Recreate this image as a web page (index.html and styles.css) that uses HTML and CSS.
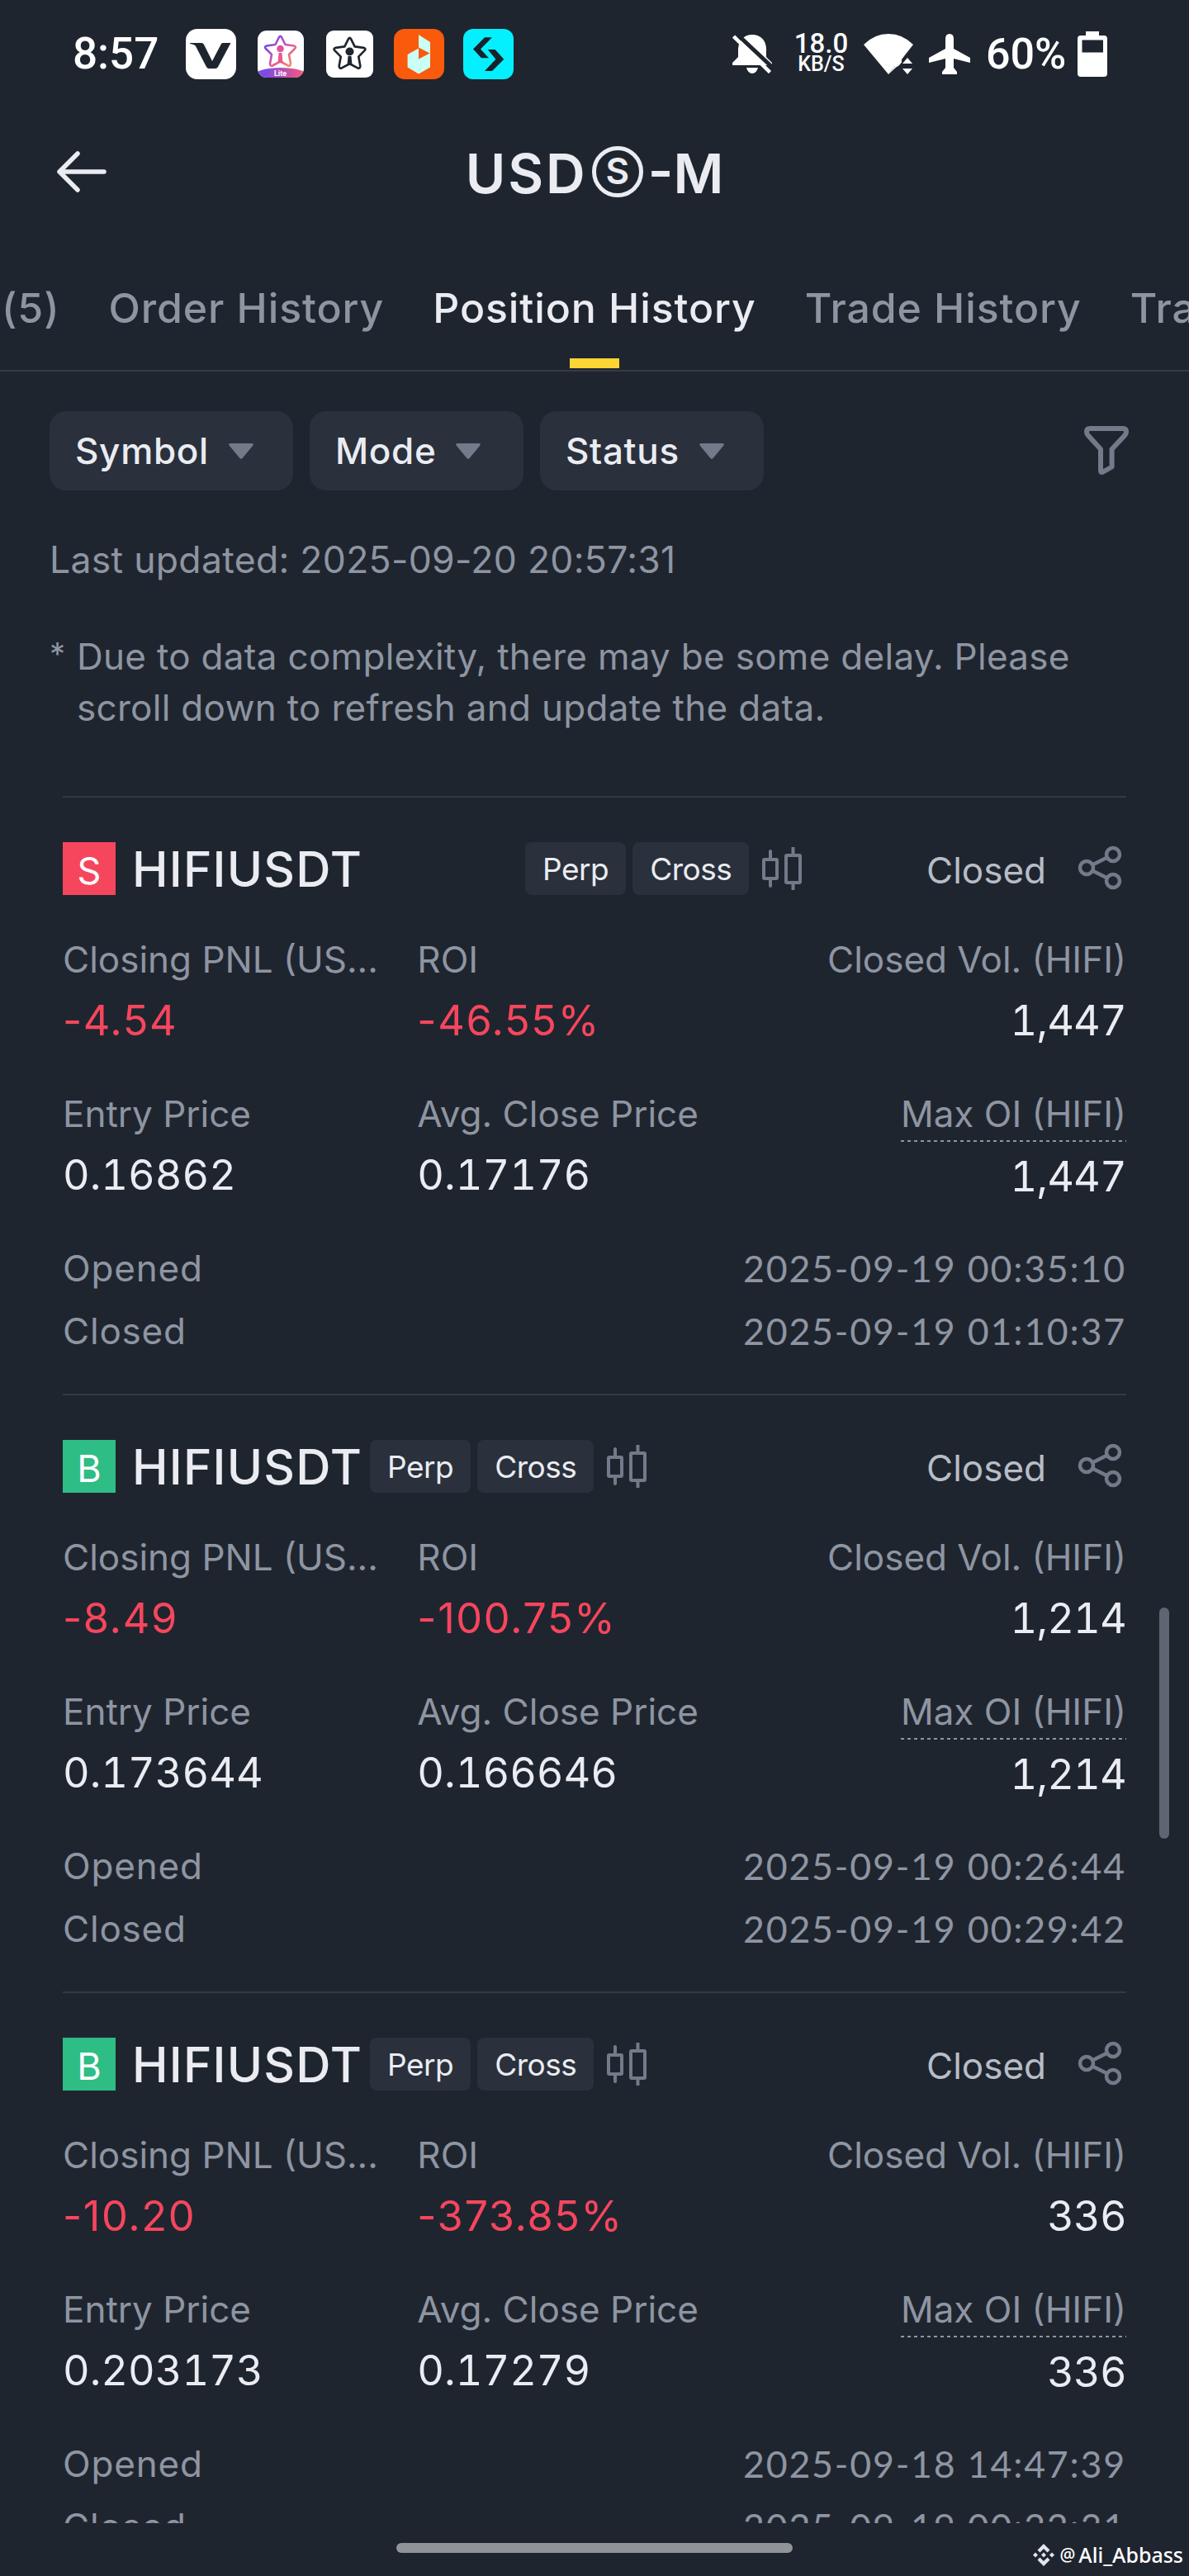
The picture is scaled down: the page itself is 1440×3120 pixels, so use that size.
FILE: index.html
```html
<!DOCTYPE html>
<html lang="en">
<head>
  <meta charset="UTF-8" />
  <meta name="viewport" content="width=device-width, initial-scale=1" />
  <title>Position History</title>
  <link rel="stylesheet" href="styles.css">
</head>
<body>
  <!-- Shared icons -->
  <svg class="sprite" width="0" height="0">
    <symbol id="candles" viewBox="0 0 48 52">
      <g fill="none" stroke="#737a89" stroke-width="4">
        <rect x="2" y="15" width="16" height="23" rx="1" />
        <rect x="29" y="10" width="17" height="33" rx="1" />
        <path d="M10 5v9M10 39v8M37.500 1v8M37.500 44v7" stroke-linecap="round" />
      </g>
    </symbol>
    <symbol id="share" viewBox="0 0 54 54">
      <g fill="none" stroke="#737a89" stroke-width="4.500">
        <circle cx="11" cy="27" r="8" />
        <circle cx="43" cy="11" r="8" />
        <circle cx="43" cy="43" r="8" />
        <path d="M18 23.500L36 14.500M18 30.500L36 39.500" />
      </g>
    </symbol>
    <symbol id="star" viewBox="0 0 42 41">
      <path d="M19.500 3.500Q21 1 22.500 3.500L27 12.500L37.500 14Q41 15 38.500 17.500L31.500 24.500L33.500 35.500Q33.500 39 30.500 38L21 33L11.500 38Q8.500 39 8.500 35.500L10.500 24.500L3.500 17.500Q1 15 4.500 14L15 12.500Z" fill="none" stroke-width="2.600" stroke-linejoin="round" />
    </symbol>
  </svg>

  <div class="screen">
    <!-- Status bar -->
    <div class="status-bar">
      <span class="time">8:57</span>
      <div class="apps">
        <svg width="61" height="61" viewBox="0 0 61 61">
          <rect width="61" height="61" rx="14" fill="#fff" />
          <path d="M5 17H19Q21 17 22 19L32 39L43 18Q43.500 17 45 17H54.500L39 46Q38 48 36 48H28Q26 48 25 46L12 21Q11 19 5 18Z" fill="#1f252f" />
        </svg>
        <svg width="61" height="61" viewBox="0 0 61 61">
          <defs>
            <linearGradient id="pink" x1="0" y1="0" x2="1" y2="1">
              <stop offset="0.200" stop-color="#7a4be6" />
              <stop offset="0.550" stop-color="#e0549e" />
              <stop offset="1" stop-color="#f59a5c" />
            </linearGradient>
            <linearGradient id="lite" x1="0" y1="0" x2="1" y2="0">
              <stop offset="0.200" stop-color="#7a4be6" />
              <stop offset="0.900" stop-color="#f4577f" />
            </linearGradient>
            <clipPath id="tile"><rect x="3" y="2" width="56" height="57" rx="11" /></clipPath>
          </defs>
          <rect x="3" y="2" width="56" height="57" rx="11" fill="#fff" />
          <g clip-path="url(#tile)">
            <ellipse cx="31" cy="56" rx="32" ry="9" fill="url(#lite)" />
          </g>
          <use href="#star" x="9.500" y="6.500" width="42" height="41" stroke="url(#pink)" />
          <circle cx="30.500" cy="24" r="4.300" fill="#e0549e" />
          <path d="M28.500 29h4l1 12h-6z" fill="#ea5a8c" />
          <text class="lite" x="30.500" y="57">Lite</text>
        </svg>
        <svg width="61" height="61" viewBox="0 0 61 61">
          <rect x="2" y="2" width="57" height="57" rx="9" fill="#fff" />
          <use href="#star" x="9" y="8" width="43" height="43" stroke="#1f252f" />
          <circle cx="30.500" cy="27.500" r="5" fill="#1f252f" />
          <path d="M28.500 33h4l1 11h-6z" fill="#1f252f" />
        </svg>
        <svg width="61" height="61" viewBox="0 0 61 61">
          <rect width="61" height="61" rx="13" fill="#f95a0c" />
          <path d="M30 7L44 16V46.600L30 54.500L16.600 46.600V31L30 23.500Z" fill="#c9fff4" />
          <path d="M30 22.500L43.500 29.500L30 36.500Z" fill="#f95a0c" />
        </svg>
        <svg width="61" height="61" viewBox="0 0 61 61">
          <rect width="61" height="61" rx="12" fill="#04f0ff" />
          <path d="M26 10.300H35L21 24.500L31 35.300H22L12 24.500Z" fill="#16222c" />
          <path d="M29.800 25H38.600L49.300 36.700L35 51H26L39.400 36.700Z" fill="#16222c" />
        </svg>
      </div>

      <div class="system">
        <svg width="48" height="48" viewBox="0 0 48 48">
          <path d="M7 18C8 7 15 1 24 1C34 1 41 8 41 18V28L48 35V38H0V35L7 28Z" fill="#fff" />
          <path d="M17 41H31Q29 48 24 48Q19 48 17 41Z" fill="#fff" />
          <path d="M3.500 -1.500L51 43" stroke="#1f252f" stroke-width="5" />
          <path d="M0 -2V8L7 15V0Z" fill="#1f252f" />
          <path d="M1.500 3L45.500 46.500" stroke="#fff" stroke-width="4.500" />
        </svg>
        <div class="speed">
          <span class="rate">18.0</span>
          <span class="unit">KB/S</span>
        </div>
        <svg width="60" height="49" viewBox="0 0 60 49">
          <path d="M30 49L0 13Q13 0 30 0Q47 0 60 13L50.500 25L46 31V41L38 39Z" fill="#fff" />
          <path d="M44 37L53 25.500L63 37V49H44L36 44Z" fill="#1f252f" />
          <path d="M30 49L46 29.500L42 35V38Z" fill="#fff" />
          <path d="M47 36L53 29L59 36ZM47 42L53 49L59 42Z" fill="#fff" />
        </svg>
        <svg width="50" height="49" viewBox="0 0 50 49">
          <path d="M25 0Q30 0 30 6V18L50 29V35L30 30V41L34 46V49H16V46L20 41V30L0 35V29L20 18V6Q20 0 25 0Z" fill="#fff" />
        </svg>
        <span class="battery">60%</span>
        <svg width="36" height="55" viewBox="0 0 36 55">
          <path d="M10 0H26V5H32Q36 5 36 9V51Q36 55 32 55H4Q0 55 0 51V9Q0 5 4 5H10Z" fill="#fff" />
          <rect x="5.500" y="10.500" width="25.500" height="15" fill="#1f252f" />
        </svg>
      </div>
    </div>

    <!-- Header -->
    <header class="header">
      <svg class="back" width="62" height="50" viewBox="0 0 62 50">
        <path d="M26 3L4 25L26 47M4 25H58" fill="none" stroke="#eaecf1" stroke-width="5.500" stroke-linecap="round" stroke-linejoin="round" />
      </svg>
      <h1 class="title"><span class="usd">USD</span><span class="coin">S</span><span>-M</span></h1>
    </header>

    <nav class="tabs">
      <a class="tab">(5)</a>
      <a class="tab">Order History</a>
      <a class="tab active">Position History</a>
      <a class="tab">Trade History</a>
      <a class="tab">Transaction History</a>
    </nav>

    <!-- Filters -->
    <div class="filters">
      <div class="filter">Symbol <svg width="30" height="19" viewBox="0 0 30 19"><path d="M2 0H28Q31 0 29 3L17 17.500Q15 20 13 17.500L1 3Q-1 0 2 0Z" fill="#737a89" /></svg></div>
      <div class="filter">Mode <svg width="30" height="19" viewBox="0 0 30 19"><path d="M2 0H28Q31 0 29 3L17 17.500Q15 20 13 17.500L1 3Q-1 0 2 0Z" fill="#737a89" /></svg></div>
      <div class="filter">Status <svg width="30" height="19" viewBox="0 0 30 19"><path d="M2 0H28Q31 0 29 3L17 17.500Q15 20 13 17.500L1 3Q-1 0 2 0Z" fill="#737a89" /></svg></div>
      <svg class="funnel" width="54" height="60" viewBox="0 0 54 60">
        <path d="M7 3H47Q51 3 51 7Q51 9 49.500 11L33.600 28V49.500L23 55.500Q20 57 20 54V28L4.500 11Q3 9 3 7Q3 3 7 3Z" fill="none" stroke="#737a89" stroke-width="6" stroke-linejoin="round" />
      </svg>
    </div>

    <p class="updated">Last updated: 2025-09-20 20:57:31</p>
    <div class="note">
      <span class="asterisk">*</span>
      <p>Due to data complexity, there may be some delay. Please<br>scroll down to refresh and update the data.</p>
    </div>

    <!-- Positions -->
    <div class="positions">
      <div class="position">
        <div class="head">
          <span class="side sell">S</span>
          <span class="pair wide">HIFIUSDT</span>
          <span class="tag">Perp</span>
          <span class="tag">Cross</span>
          <svg class="candles" width="48" height="52"><use href="#candles" /></svg>
          <span class="state">Closed</span>
          <svg class="share" width="54" height="54"><use href="#share" /></svg>
        </div>
        <div class="stats">
          <div><div class="label">Closing PNL (US...</div><div class="value loss">-4.54</div></div>
          <div><div class="label">ROI</div><div class="value loss">-46.55%</div></div>
          <div class="right"><div class="label">Closed Vol. (HIFI)</div><div class="value">1,447</div></div>
        </div>
        <div class="stats">
          <div><div class="label">Entry Price</div><div class="value">0.16862</div></div>
          <div><div class="label">Avg. Close Price</div><div class="value">0.17176</div></div>
          <div class="right"><div class="label dashed">Max OI (HIFI)</div><div class="value">1,447</div></div>
        </div>
        <div class="times">
          <div class="row"><span>Opened</span><span class="date">2025-09-19 00:35:10</span></div>
          <div class="row"><span>Closed</span><span class="date">2025-09-19 01:10:37</span></div>
        </div>
      </div>

      <div class="position">
        <div class="head">
          <span class="side buy">B</span>
          <span class="pair">HIFIUSDT</span>
          <span class="tag">Perp</span>
          <span class="tag">Cross</span>
          <svg class="candles" width="48" height="52"><use href="#candles" /></svg>
          <span class="state">Closed</span>
          <svg class="share" width="54" height="54"><use href="#share" /></svg>
        </div>
        <div class="stats">
          <div><div class="label">Closing PNL (US...</div><div class="value loss">-8.49</div></div>
          <div><div class="label">ROI</div><div class="value loss">-100.75%</div></div>
          <div class="right"><div class="label">Closed Vol. (HIFI)</div><div class="value">1,214</div></div>
        </div>
        <div class="stats">
          <div><div class="label">Entry Price</div><div class="value">0.173644</div></div>
          <div><div class="label">Avg. Close Price</div><div class="value">0.166646</div></div>
          <div class="right"><div class="label dashed">Max OI (HIFI)</div><div class="value">1,214</div></div>
        </div>
        <div class="times">
          <div class="row"><span>Opened</span><span class="date">2025-09-19 00:26:44</span></div>
          <div class="row"><span>Closed</span><span class="date">2025-09-19 00:29:42</span></div>
        </div>
      </div>

      <div class="position">
        <div class="head">
          <span class="side buy">B</span>
          <span class="pair">HIFIUSDT</span>
          <span class="tag">Perp</span>
          <span class="tag">Cross</span>
          <svg class="candles" width="48" height="52"><use href="#candles" /></svg>
          <span class="state">Closed</span>
          <svg class="share" width="54" height="54"><use href="#share" /></svg>
        </div>
        <div class="stats">
          <div><div class="label">Closing PNL (US...</div><div class="value loss">-10.20</div></div>
          <div><div class="label">ROI</div><div class="value loss">-373.85%</div></div>
          <div class="right"><div class="label">Closed Vol. (HIFI)</div><div class="value">336</div></div>
        </div>
        <div class="stats">
          <div><div class="label">Entry Price</div><div class="value">0.203173</div></div>
          <div><div class="label">Avg. Close Price</div><div class="value">0.17279</div></div>
          <div class="right"><div class="label dashed">Max OI (HIFI)</div><div class="value">336</div></div>
        </div>
        <div class="times">
          <div class="row"><span>Opened</span><span class="date">2025-09-18 14:47:39</span></div>
          <div class="row"><span>Closed</span><span class="date">2025-09-19 00:22:31</span></div>
        </div>
      </div>
    </div>
  </div>

  <div class="bottom">
    <div class="home-bar"></div>
    <div class="credit">
      <svg width="26" height="27" viewBox="0 0 26 27">
        <g fill="#e3e5ea">
          <path d="M13 0L20.500 7.500L17.500 10.500L13 6L8.500 10.500L5.500 7.500Z" />
          <path d="M13 27L20.500 19.500L17.500 16.500L13 21L8.500 16.500L5.500 19.500Z" />
          <path d="M13 10.500L16 13.500L13 16.500L10 13.500Z" />
          <path d="M3 10.500L6 13.500L3 16.500L0 13.500ZM23 10.500L26 13.500L23 16.500L20 13.500Z" />
        </g>
      </svg>
      <span class="at">@</span><span>Ali_Abbass</span>
    </div>
  </div>
  <div class="scrollbar"></div>
</body>
</html>
```
FILE: styles.css
```css
* {
  box-sizing: border-box;
}

body {
  margin: 0;
  position: relative;
  width: 1440px;
  height: 3120px;
  overflow: hidden;
  background-color: #1f252f;
  color: #eaecf1;
  font-family: Inter, "Liberation Sans", sans-serif;
}

h1, p {
  margin: 0;
}

svg {
  display: block;
  flex: none;
}

.sprite {
  position: absolute;
}

.screen {
  height: 3056px;
  overflow: hidden;
}

/* Status bar */
.status-bar {
  display: flex;
  align-items: center;
  height: 130px;
  padding: 0 99px 0 88px;
  color: #fff;
  font-family: Roboto, sans-serif;
  font-weight: 500;
}

.time {
  width: 137px;
  font-size: 53px;
}

.apps {
  display: flex;
  gap: 23px;
}

.lite {
  font: 700 9px Roboto, sans-serif;
  fill: #fff;
  text-anchor: middle;
}

.system {
  display: flex;
  align-items: center;
  margin-left: auto;
}

.speed {
  display: flex;
  flex-direction: column;
  align-items: center;
  width: 61px;
  margin: 0 21px 0 29px;
  white-space: nowrap;
}

.rate {
  font-size: 33px;
  line-height: 26px;
}

.unit {
  font-size: 25px;
  line-height: 24px;
}

.battery {
  width: 93px;
  margin: 0 18px 0 19px;
  font-size: 52px;
  white-space: nowrap;
}

.system svg + svg {
  margin-left: 19px;
}

/* Header */
.header {
  display: grid;
  grid-template-columns: 140px 1fr 140px;
  align-items: center;
  height: 160px;
}

.back {
  margin: -4px 0 0 68px;
}

.title {
  display: flex;
  align-items: center;
  justify-content: center;
  font-size: 66px;
  font-weight: 600;
  line-height: 80px;
}

.usd {
  letter-spacing: 3px;
}

.coin {
  width: 62px;
  height: 62px;
  margin: -5px 6px 0 5px;
  border: 5px solid #eaecf1;
  border-radius: 50%;
  font-size: 44px;
  line-height: 51px;
  text-align: center;
}

/* Tabs */
.tabs {
  display: flex;
  gap: 59px;
  height: 160px;
  padding-left: 2px;
  overflow: hidden;
  border-bottom: 2px solid #343b46;
}

.tab {
  position: relative;
  flex: none;
  color: #8e95a2;
  font-size: 50px;
  font-weight: 500;
  line-height: 166px;
  letter-spacing: 0.9px;
  white-space: nowrap;
}

.tab.active {
  color: #eaecf1;
}

.tab.active::after {
  content: "";
  position: absolute;
  left: 50%;
  bottom: 2px;
  width: 60px;
  height: 12px;
  margin-left: -30px;
  background-color: #fcd535;
}

/* Filters */
.filters {
  display: flex;
  align-items: center;
  gap: 20px;
  padding: 48px 73px 0 60px;
}

.filter {
  display: flex;
  align-items: center;
  gap: 24px;
  height: 96px;
  min-width: 259px;
  padding: 0 48px 0 31px;
  border-radius: 20px;
  background-color: #2a303c;
  font-size: 44px;
  font-weight: 500;
  letter-spacing: 0.7px;
}

.funnel {
  margin-left: auto;
}

.updated {
  margin: 53px 0 55px 60px;
  color: #8e95a2;
  font-size: 44.5px;
  line-height: 62px;
  letter-spacing: 0.3px;
}

.note {
  display: flex;
  padding-left: 60px;
  color: #8e95a2;
  font-size: 44px;
  line-height: 62px;
  letter-spacing: 0.3px;
}

.asterisk {
  width: 33px;
  font-size: 38px;
  line-height: 56px;
}

/* Positions */
.positions {
  padding: 76px 76px 0;
}

.position {
  height: 724px;
  padding-top: 54px;
  border-top: 2px solid #343a45;
}

.head {
  display: flex;
  align-items: center;
  height: 64px;
}

.side {
  width: 64px;
  height: 64px;
  margin-right: 20px;
  color: #fff;
  font-size: 45px;
  line-height: 70px;
  text-align: center;
}

.sell {
  background-color: #f6465d;
}

.buy {
  background-color: #2ebd85;
}

.pair {
  width: 288px;
  font-size: 58.5px;
  font-weight: 500;
  letter-spacing: 1.2px;
}

.pair.wide {
  width: 476px;
}

.tag {
  height: 64px;
  margin-right: 8px;
  padding: 0 21px;
  border-radius: 8px;
  background-color: #2a303c;
  font-size: 37px;
  line-height: 66px;
  letter-spacing: -0.5px;
}

.candles {
  margin-left: 8px;
}

.state {
  margin: 4px 38px 0 auto;
  color: #b7bdc6;
  font-size: 44px;
}

.share {
  margin: -2px 5px 0 0;
}

.stats {
  display: grid;
  grid-template-columns: repeat(3, 1fr);
  height: 134px;
  margin-top: 48px;
}

.stats + .stats {
  margin-top: 53px;
}

.label {
  color: #8e95a2;
  font-size: 44px;
  line-height: 60px;
  white-space: nowrap;
}

/* 4px dashes with 4px gaps under the label */
.dashed {
  padding-bottom: 4px;
  background: repeating-linear-gradient(90deg, #8e95a2 0 4px, transparent 4px 8px) left bottom / 100% 2px no-repeat;
}

.value {
  margin-top: 12px;
  font-size: 50.5px;
  line-height: 60px;
  font-variant-numeric: tabular-nums;
}

.label:not(.dashed) + .value {
  margin-top: 14px;
}

.loss {
  color: #f6465d;
  font-variant-numeric: normal;
  letter-spacing: 1.6px;
}

.right {
  display: flex;
  flex-direction: column;
  align-items: flex-end;
}

.right .value {
  letter-spacing: -0.8px;
}

.times {
  margin-top: 53px;
}

.row {
  display: flex;
  justify-content: space-between;
  margin-bottom: 16px;
  color: #8e95a2;
  font-size: 44px;
  line-height: 60px;
  letter-spacing: 0.8px;
}

.date {
  font-family: Lato, sans-serif;
  font-size: 44.7px;
  letter-spacing: 1.8px;
}

/* Bottom area */
.bottom {
  position: relative;
  height: 64px;
  padding-top: 24px;
}

.home-bar {
  width: 480px;
  height: 12px;
  margin: 0 auto;
  border-radius: 6px;
  background-color: #909397;
}

.credit {
  position: absolute;
  right: 7px;
  top: 19px;
  display: flex;
  align-items: center;
  color: #fff;
  font: 500 25px/38px "Noto Sans", sans-serif;
}

.at {
  margin: 0 4px 0 6px;
  font-size: 21px;
}

.scrollbar {
  position: absolute;
  top: 1947px;
  right: 24px;
  width: 12px;
  height: 280px;
  border-radius: 6px;
  background-color: #5f6573;
}
```
